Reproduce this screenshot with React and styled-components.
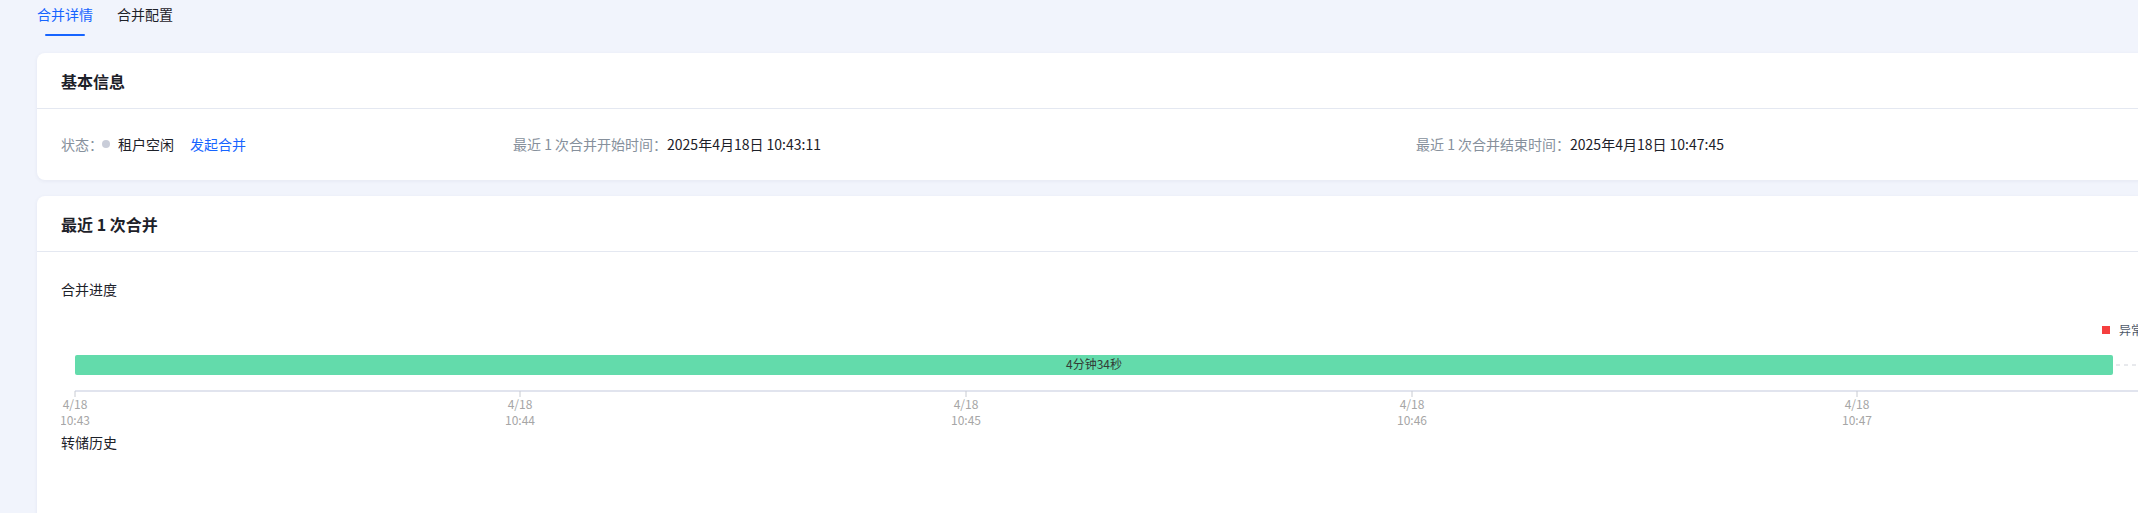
import React from "react";
import styled, { createGlobalStyle } from "styled-components";

const GlobalStyle = createGlobalStyle`
  html, body {
    margin: 0;
    padding: 0;
    background: #f1f4fc;
    overflow: hidden;
    font-family: "Noto Sans CJK SC", "Noto Sans", sans-serif;
    color: #1d2129;
  }
`;

const Page = styled.div`
  padding-left: 37px;
  min-height: 513px;
`;

const TabBar = styled.div`
  display: flex;
  gap: 24px;
  height: 36px;
`;

const Tab = styled.div`
  position: relative;
  font-size: 14px;
  line-height: 22px;
  padding-top: 3px;
  color: ${(p) => (p.$active ? "#1664ff" : "#1d2129")};
  &::after {
    content: "";
    display: ${(p) => (p.$active ? "block" : "none")};
    position: absolute;
    left: 50%;
    bottom: 0;
    width: 40px;
    height: 2px;
    margin-left: -20px;
    background: #1664ff;
    border-radius: 1px;
  }
`;

const Stack = styled.div`
  display: flex;
  flex-direction: column;
  gap: 16px;
  margin-top: 17px;
`;

const Card = styled.section`
  width: 2200px;
  background: #fff;
  border-radius: 8px;
  box-shadow: 0 1px 4px rgba(30, 40, 80, 0.06);
  min-height: ${(p) => p.$minHeight || "auto"};
`;

const CardHeader = styled.div`
  height: 55px;
  display: flex;
  align-items: center;
  padding: 0 24px;
  border-bottom: 1px solid #e4e8f1;
  font-size: 16px;
  font-weight: 600;
  color: #1d2129;
`;

const CardBody = styled.div`
  padding: ${(p) => p.$pad || "24px"};
`;

const InfoGrid = styled.div`
  display: grid;
  grid-template-columns: 452px 903px 1fr;
  font-size: 14px;
  line-height: 22px;
`;

const InfoItem = styled.div`
  display: flex;
  align-items: center;
  white-space: nowrap;
`;

const Label = styled.span`
  color: #86909c;
`;

const Value = styled.span`
  color: #1d2129;
`;

const StatusDot = styled.span`
  width: 8px;
  height: 8px;
  border-radius: 50%;
  background: #c9cdd9;
  margin: 0 8px 0 -1px;
`;

const LinkText = styled.a`
  color: #1664ff;
  margin-left: 16px;
  cursor: pointer;
`;

const SectionTitle = styled.div`
  font-size: 14px;
  line-height: 22px;
  color: #1d2129;
`;

const ChartWrap = styled.div`
  margin-top: 9px;
  height: 122px;
`;

const ticks = [
  { x: 14, t: "10:43" },
  { x: 459, t: "10:44" },
  { x: 905, t: "10:45" },
  { x: 1351, t: "10:46" },
  { x: 1796, t: "10:47" },
];

function Timeline() {
  return (
    <svg width="2160" height="122" style={{ display: "block" }}>
      <rect x="2041" y="17" width="8" height="8" fill="#f53f3f" />
      <text
        x="2058"
        y="25.5"
        fontSize="12"
        fill="#4e5969"
        fontFamily='"Noto Sans CJK SC", sans-serif'
      >
        异常
      </text>
      <rect x="14" y="46" width="2038" height="20" rx="2" fill="#63dbab" />
      <text
        x="1033"
        y="60"
        fontSize="12"
        textAnchor="middle"
        fill="#333a36"
        fontFamily='"Noto Sans CJK SC", sans-serif'
      >
        4分钟34秒
      </text>
      <line
        x1="2055"
        y1="56"
        x2="2160"
        y2="56"
        stroke="#d0d3da"
        strokeWidth="1"
        strokeDasharray="4 4"
      />
      <line x1="14" y1="82" x2="2160" y2="82" stroke="#e1e4ee" strokeWidth="2" />
      {ticks.map((k) => (
        <g key={k.t}>
          <line x1={k.x} y1="82" x2={k.x} y2="88" stroke="#c8cbd2" strokeWidth="1" />
          <text
            x={k.x}
            y="100"
            fontSize="12"
            textAnchor="middle"
            fill="#a6a6a6"
            fontFamily='"Noto Sans CJK SC", sans-serif'
          >
            4/18
          </text>
          <text
            x={k.x}
            y="116"
            fontSize="12"
            textAnchor="middle"
            fill="#a6a6a6"
            fontFamily='"Noto Sans CJK SC", sans-serif'
          >
            {k.t}
          </text>
        </g>
      ))}
    </svg>
  );
}

export default function App() {
  return (
    <>
      <GlobalStyle />
      <Page>
        <TabBar>
          <Tab $active>合并详情</Tab>
          <Tab>合并配置</Tab>
        </TabBar>
        <Stack>
          <Card>
            <CardHeader>基本信息</CardHeader>
            <CardBody $pad="24px 24px 25px">
              <InfoGrid>
                <InfoItem>
                  <Label>状态：</Label>
                  <StatusDot />
                  <Value>租户空闲</Value>
                  <LinkText>发起合并</LinkText>
                </InfoItem>
                <InfoItem>
                  <Label>最近 1 次合并开始时间：</Label>
                  <Value>2025年4月18日 10:43:11</Value>
                </InfoItem>
                <InfoItem>
                  <Label>最近 1 次合并结束时间：</Label>
                  <Value>2025年4月18日 10:47:45</Value>
                </InfoItem>
              </InfoGrid>
            </CardBody>
          </Card>
          <Card $minHeight="400px">
            <CardHeader>最近 1 次合并</CardHeader>
            <CardBody $pad="26px 24px 24px">
              <SectionTitle>合并进度</SectionTitle>
              <ChartWrap>
                <Timeline />
              </ChartWrap>
              <SectionTitle>转储历史</SectionTitle>
            </CardBody>
          </Card>
        </Stack>
      </Page>
    </>
  );
}
